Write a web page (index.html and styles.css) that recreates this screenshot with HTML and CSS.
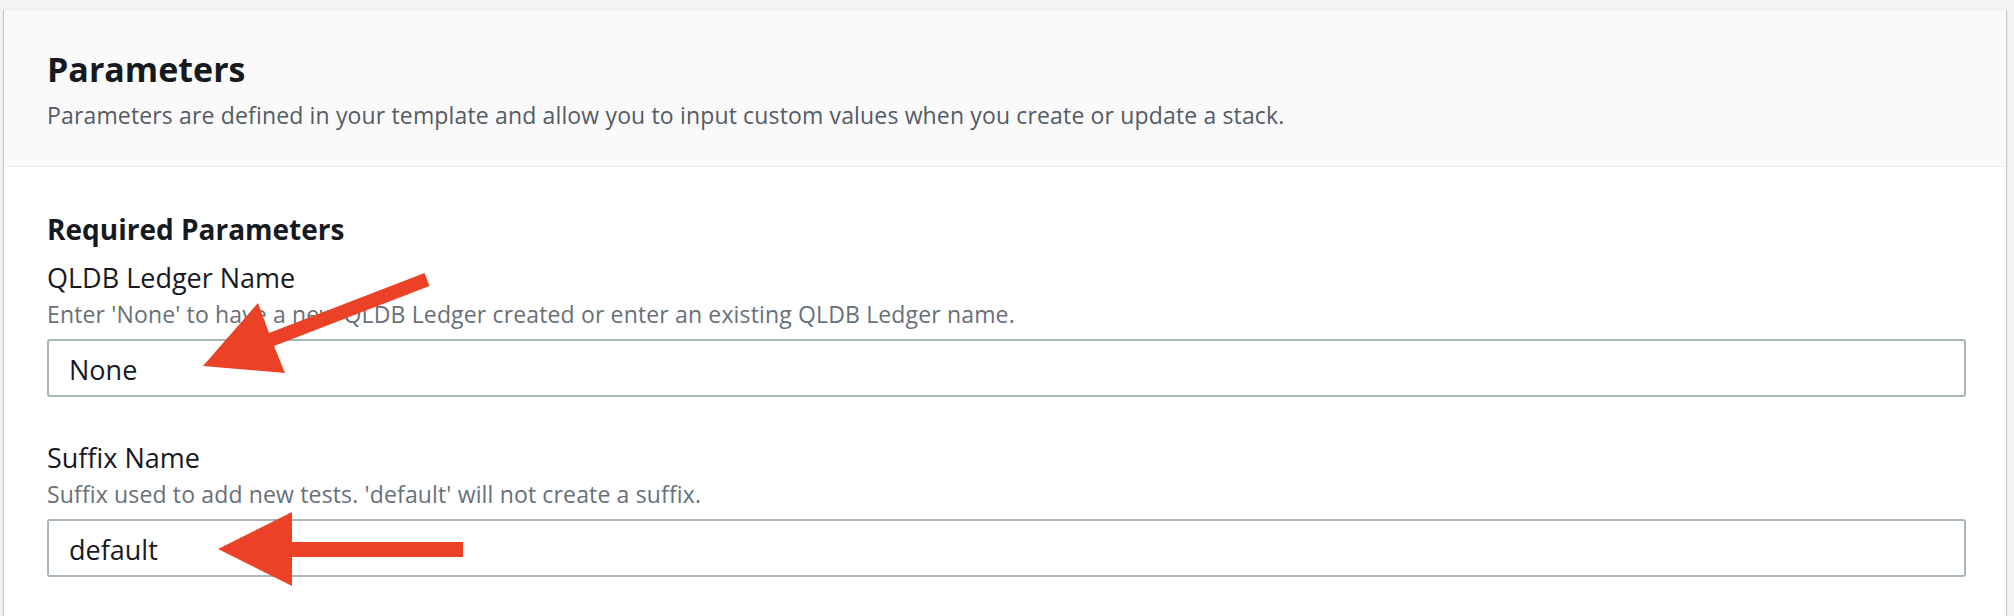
FILE: index.html
```html
<!DOCTYPE html>
<html lang="en">
<head>
<meta charset="utf-8">
<title>Parameters</title>
<link rel="stylesheet" href="styles.css">
</head>
<body>
<div class="page">
  <section class="panel">
    <header class="panel-header">
      <h2 class="panel-title">Parameters</h2>
      <p class="panel-desc">Parameters are defined in your template and allow you to input custom values when you create or update a stack.</p>
    </header>
    <div class="panel-body">
      <h3 class="group-title">Required Parameters</h3>
      <div class="field">
        <label class="field-label">QLDB Ledger Name</label>
        <div class="field-desc">Enter 'None' to have a new QLDB Ledger created or enter an existing QLDB Ledger name.</div>
        <div class="input">None</div>
      </div>
      <div class="field">
        <label class="field-label">Suffix Name</label>
        <div class="field-desc">Suffix used to add new tests. 'default' will not create a suffix.</div>
        <div class="input">default</div>
      </div>
    </div>
  </section>
  <svg class="annotations" width="2014" height="616" viewBox="0 0 2014 616" xmlns="http://www.w3.org/2000/svg">
    <polygon class="arrow" points="424.5,273 429.5,286 274,346 285,373 203,366 258,303 269,333"/>
    <polygon class="arrow" points="463,542 463,557 292,557 292,586 218,549 292,512 292,542"/>
  </svg>
</div>
</body>
</html>
```

FILE: styles.css
```css
html, body {
  margin: 0;
  padding: 0;
}
body {
  background: #f2f3f3;
  font-family: "Open Sans", "Noto Sans", sans-serif;
  color: #16191f;
  overflow: hidden;
}
.page {
  position: relative;
  width: 2014px;
  height: 616px;
  padding: 9px 8px 0 4px;
  box-sizing: border-box;
  overflow: hidden;
}
.panel {
  background: #ffffff;
  border-top: 1px solid #eaeded;
  box-shadow: 0 1px 1px 0 rgba(0, 28, 36, 0.3), 1px 1px 1px 0 rgba(0, 28, 36, 0.15), -1px 1px 1px 0 rgba(0, 28, 36, 0.15);
  height: 640px;
}
.panel-header {
  background: #fafafa;
  border-bottom: 1px solid #eaeded;
  padding: 37px 40px 35px 43px;
}
.panel-title {
  margin: 0;
  font-size: 34px;
  line-height: 44px;
  font-weight: 700;
  color: #16191f;
}
.panel-desc {
  margin: 8px 0 0;
  font-size: 23px;
  line-height: 32px;
  letter-spacing: 0.15px;
  color: #545b64;
}
.panel-body {
  padding: 44px 40px 0 43px;
  display: flex;
  flex-direction: column;
}
.group-title {
  margin: 0;
  font-size: 28px;
  line-height: 36px;
  font-weight: 700;
}
.field {
  display: flex;
  flex-direction: column;
  margin-top: 14px;
}
.field + .field {
  margin-top: 44px;
}
.field-label {
  font-size: 27px;
  line-height: 34px;
}
.field-desc {
  margin-top: 4px;
  font-size: 23px;
  line-height: 30px;
  letter-spacing: 0.15px;
  color: #687078;
}
.input {
  margin-top: 10px;
  height: 58px;
  box-sizing: border-box;
  border: 2px solid #aab7b8;
  border-radius: 3px;
  padding: 3px 20px 0;
  display: flex;
  align-items: center;
  font-size: 27px;
  line-height: 34px;
  color: #16191f;
  background: #ffffff;
}
.annotations {
  position: absolute;
  left: 0;
  top: 0;
  pointer-events: none;
}
.arrow {
  fill: #ea4127;
}
```
